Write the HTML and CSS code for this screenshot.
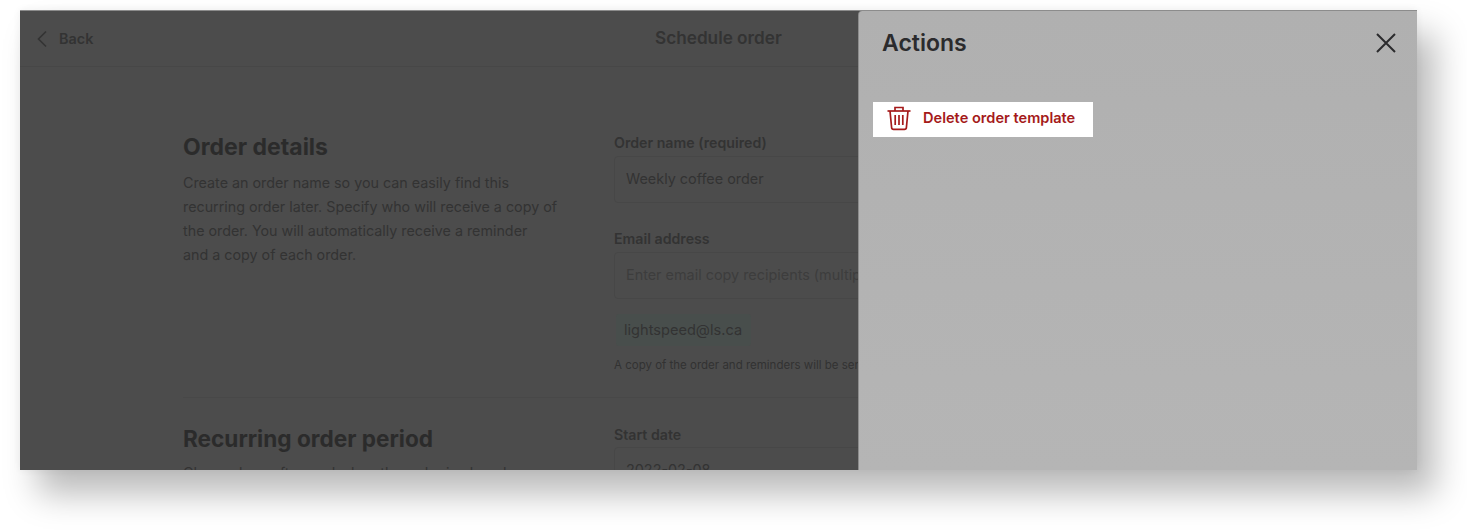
FILE: index.html
```html
<!DOCTYPE html>
<html lang="en">
<head>
    <meta charset="UTF-8">
    <title>Schedule order</title>
    <link rel="stylesheet" href="styles.css">
</head>
<body>
    <div class="window">
        <div class="topbar">
            <div class="back">
                <svg class="back-icon" width="12" height="18" viewBox="0 0 12 18"><path d="M10 1.5 2.5 9l7.5 7.5" fill="none" stroke="#333" stroke-width="1.6"/></svg>
                <span>Back</span>
            </div>
            <div class="page-title">Schedule order</div>
        </div>

        <div class="form-section first">
            <div class="intro">
                <h2>Order details</h2>
                <p>Create an order name so you can easily find this recurring order later. Specify who will receive a copy of the order. You will automatically receive a reminder<br>and a copy of each order.</p>
            </div>
            <div class="fields">
                <label>Order name (required)</label>
                <div class="input">Weekly coffee order</div>
                <label class="next">Email address</label>
                <div class="input placeholder">Enter email copy recipients (multiple emails allowed)</div>
                <div class="chip">lightspeed@ls.ca</div>
                <div class="help">A copy of the order and reminders will be sent to these email addresses.</div>
            </div>
        </div>

        <div class="form-section second">
            <div class="intro">
                <h2>Recurring order period</h2>
                <p>Choose how often and when the order is placed.</p>
            </div>
            <div class="fields">
                <label>Start date</label>
                <div class="input">2022-02-08</div>
            </div>
        </div>

        <!-- side panel over the dimmed page -->
        <div class="panel">
            <div class="panel-head">
                <h3>Actions</h3>
                <svg width="22" height="22" viewBox="0 0 22 22"><path d="M2 2l18 18M20 2 2 20" fill="none" stroke="#2b2b2d" stroke-width="2"/></svg>
            </div>
            <div class="action">
                <svg width="24" height="25" viewBox="0 0 24 25" fill="none" stroke="#a51a1a" stroke-width="1.7">
                    <path d="M0.5 5h23"/>
                    <path d="M8 5V1.5h8V5"/>
                    <path d="M3 5l1.6 16.5a2 2 0 0 0 2 1.9h10.8a2 2 0 0 0 2-1.9L21 5"/>
                    <path d="M8.2 9v10M12 9v10M15.8 9v10"/>
                </svg>
                <span>Delete order template</span>
            </div>
        </div>
    </div>
</body>
</html>
```

FILE: styles.css
```css
body {
    margin: 0;
    padding: 10px 0 0 20px;
    height: 530px;
    box-sizing: border-box;
    background: #fff;
    font-family: Inter, "Liberation Sans", sans-serif;
    overflow: hidden;
}
.window {
    position: relative;
    width: 1397px;
    height: 460px;
    background: #4c4c4c;
    border-top: 1px solid #8c8c8c;
    box-sizing: border-box;
    overflow: hidden;
    color: #333;
    box-shadow: 18px 24px 32px rgba(0,0,0,0.27), 0 0 8px rgba(0,0,0,0.06);
}
.topbar {
    display: flex;
    align-items: center;
    position: relative;
    height: 55px;
    border-bottom: 1px solid #474747;
    padding-left: 16px;
}
.back {
    display: flex;
    align-items: center;
    gap: 11px;
    font-size: 14.4px;
    font-weight: 600;
}
.page-title {
    position: absolute;
    left: 635px;
    top: 16px;
    font-size: 17.2px;
    font-weight: 600;
}
.form-section {
    display: grid;
    grid-template-columns: 375px 800px;
    column-gap: 56px;
    margin-left: 163px;
}
.form-section.first {
    padding-top: 67px;
    height: 263px;
    border-bottom: 1px solid #484848;
}
.form-section.second {
    padding-top: 27px;
}
.first .intro {
    margin-top: -2px;
}
.second .intro {
    margin-top: -1px;
}
.second .intro p {
    margin-top: -2px;
}
h2 {
    margin: 0 0 9px;
    font-size: 23px;
    line-height: 30px;
    font-weight: 700;
    color: #2b2b2b;
}
.second h2 {
    font-size: 22.6px;
}
.intro p {
    margin: 0;
    font-size: 14.3px;
    line-height: 24px;
    color: #333;
}
label {
    display: block;
    font-size: 14.2px;
    line-height: 18px;
    font-weight: 600;
    margin-bottom: 4px;
}
label.next {
    margin-top: 27px;
}
.second label {
    line-height: 20px;
    margin-bottom: 2px;
}
.input {
    box-sizing: border-box;
    height: 47px;
    line-height: 43px;
    padding-left: 11px;
    border: 1px solid #474747;
    border-radius: 4px;
    font-size: 14.4px;
    color: #333;
}
.input.placeholder {
    color: #3d3d3d;
}
.chip {
    display: inline-block;
    margin: 15px 0 0 2px;
    padding: 0 9px 0 8px;
    height: 32px;
    line-height: 32px;
    background: #484e4c;
    border-radius: 3px;
    font-size: 14.6px;
    color: #333;
}
.help {
    margin-top: 11px;
    font-size: 11.5px;
    line-height: 16px;
    color: #323232;
}
.panel {
    position: absolute;
    top: 0;
    right: 0;
    bottom: 0;
    width: 559px;
    background: linear-gradient(#b0b0b0, #b5b5b5);
    border-left: 1px solid #8c8c8c;
    border-top-left-radius: 4px;
    box-sizing: border-box;
}
.panel-head {
    display: flex;
    justify-content: space-between;
    align-items: center;
    padding: 18px 20px 0 23px;
}
h3 {
    margin: 0;
    font-size: 23px;
    line-height: 28px;
    font-weight: 600;
    color: #2b2b2d;
}
.action {
    display: flex;
    align-items: center;
    gap: 12px;
    width: 220px;
    height: 35px;
    margin: 45px 0 0 14px;
    padding: 0 0 3px 14px;
    box-sizing: border-box;
    background: #fff;
    color: #a51a1a;
    font-size: 14.6px;
    font-weight: 600;
}
```
